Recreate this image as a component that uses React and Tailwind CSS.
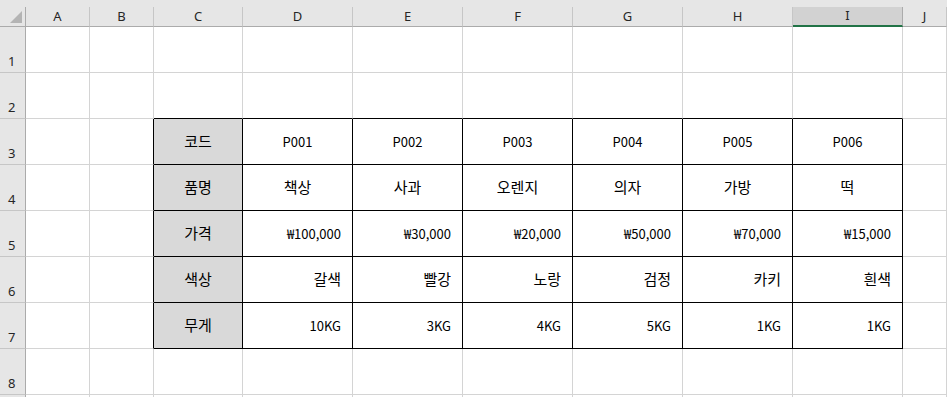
import React from "react";

const cols = ["A", "B", "C", "D", "E", "F", "G", "H", "I", "J"];
const rowsN = [1, 2, 3, 4, 5, 6, 7, 8, 9];

const labels = ["코드", "품명", "가격", "색상", "무게"];
const data = [
  ["P001", "P002", "P003", "P004", "P005", "P006"],
  ["책상", "사과", "오렌지", "의자", "가방", "떡"],
  ["₩100,000", "₩30,000", "₩20,000", "₩50,000", "₩70,000", "₩15,000"],
  ["갈색", "빨강", "노랑", "검정", "카키", "흰색"],
  ["10KG", "3KG", "4KG", "5KG", "1KG", "1KG"],
];

const font = { fontFamily: '"Noto Sans CJK KR", "Noto Sans", sans-serif' };

function Cell({ r, c }) {
  const inTable = r >= 3 && r <= 7 && c >= 2 && c <= 8;
  const aboveTable = r === 2 && c >= 2 && c <= 8;
  const leftOfTable = c === 1 && r >= 3 && r <= 7;
  let cls = "border-r border-b flex items-center ";
  cls += inTable
    ? "border-black "
    : aboveTable
    ? "border-r-[#d4d4d4] border-b-black "
    : leftOfTable
    ? "border-r-black border-b-[#d4d4d4] "
    : "border-[#d4d4d4] ";
  let content = null;
  if (inTable) {
    const ri = r - 3;
    if (c === 2) {
      cls += "bg-[#d9d9d9] justify-center text-[15px] text-black ";
      content = labels[ri];
    } else {
      const v = data[ri][c - 3];
      if (ri === 0) {
        cls += "justify-center text-[13px] text-black ";
      } else if (ri === 1) {
        cls += "justify-center text-[15px] text-black ";
      } else if (ri === 3) {
        cls += "justify-end pr-[11px] text-[15px] text-black ";
      } else {
        cls += "justify-end pr-[11px] text-[13px] text-black ";
      }
      content = v;
    }
  }
  return (
    <div className={cls} style={font}>
      {content}
    </div>
  );
}

export default function App() {
  return (
    <div className="w-[947px] h-[397px] overflow-hidden bg-white">
      <div className="h-[7px] bg-[#e6e6e6]" />
      <div
        className="grid"
        style={{
          gridTemplateColumns: "26px 64px 64px 89px 110px 110px 110px 110px 110px 110px 44px",
          gridTemplateRows: "20px repeat(9, 46px)",
        }}
      >
        <div className="bg-[#e6e6e6] border-r border-b border-[#ababab] relative">
          <svg width="26" height="20" className="absolute left-0 top-0">
            <polygon points="10,16 22,4 22,16" fill="#b4b4b4" />
          </svg>
        </div>
        {cols.map((c) => {
          const sel = c === "I";
          return (
            <div
              key={c}
              className={
                sel
                  ? "bg-[#d2d2d2] border-r border-r-[#ababab] border-b-2 border-b-[#217346] flex items-center justify-center text-[13px] text-[#262626]"
                  : "bg-[#e6e6e6] border-r border-r-[#c6c6c6] border-b border-b-[#ababab] flex items-center justify-center text-[13px] text-[#262626]"
              }
              style={{ fontFamily: '"Noto Sans", sans-serif' }}
            >
              {c}
            </div>
          );
        })}
        {rowsN.map((r) => (
          <React.Fragment key={r}>
            <div
              className="bg-[#e6e6e6] border-r border-r-[#ababab] border-b border-b-[#c6c6c6] flex items-end pl-[8px] pb-[1px] text-[13px] text-[#262626]"
              style={{ fontFamily: '"Noto Sans", sans-serif' }}
            >
              {r <= 8 ? r : null}
            </div>
            {cols.map((c, ci) => (
              <Cell key={c} r={r} c={ci} />
            ))}
          </React.Fragment>
        ))}
      </div>
    </div>
  );
}
